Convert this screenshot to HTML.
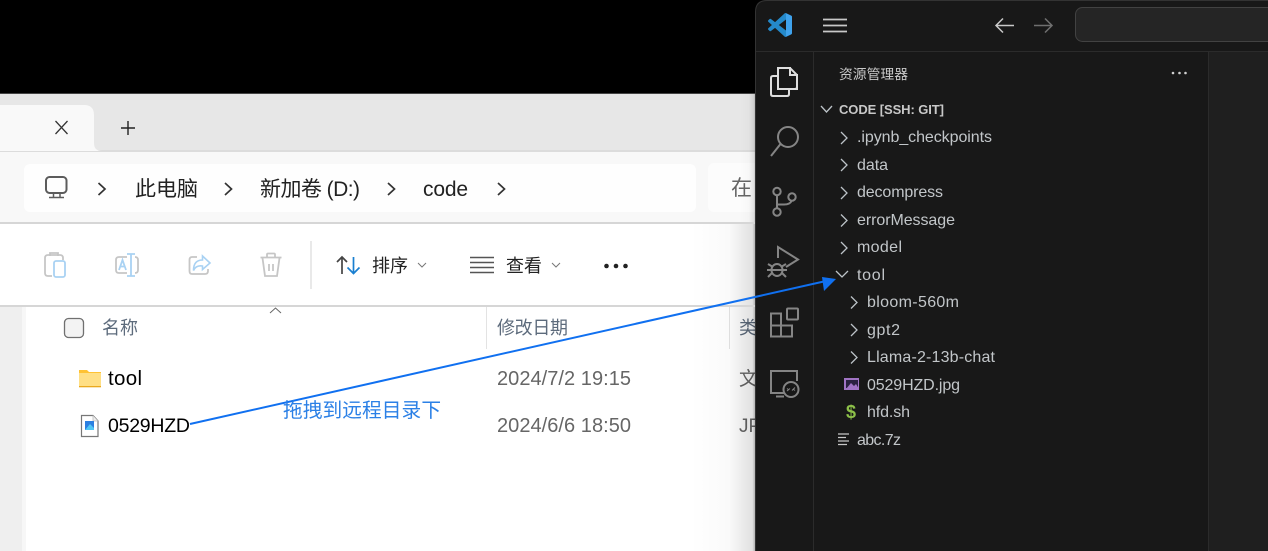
<!DOCTYPE html>
<html lang="zh"><head><meta charset="utf-8"><title>Explorer and VS Code</title>
<style>
html,body{margin:0;padding:0;background:#000;width:1268px;height:551px;overflow:hidden}
svg{display:block}
text{font-family:"Liberation Sans","Noto Sans CJK SC",sans-serif;white-space:pre}
.t{font-size:16px;fill:#c2c6c9}
.i{fill:none;stroke:#858585;stroke-width:2}
.c{fill:none;stroke:#bcc3c8;stroke-width:1.3}
.g{fill:none;stroke:#c6c6c6;stroke-width:1.8}
.b{fill:none;stroke:#a9d2f3;stroke-width:1.8}
.k{fill:none;stroke:#333;stroke-width:1.7}
</style></head><body>
<svg width="1268" height="551" viewBox="0 0 1268 551" xmlns="http://www.w3.org/2000/svg">
<defs><linearGradient id="sh" x1="0" x2="1" y1="0" y2="0">
<stop offset="0" stop-color="#000" stop-opacity="0"/><stop offset=".6" stop-color="#000" stop-opacity=".02"/><stop offset=".96" stop-color="#000" stop-opacity=".12"/><stop offset="1" stop-color="#000" stop-opacity=".3"/></linearGradient></defs>
<rect width="1268" height="551" fill="#000"/>
<!-- explorer -->
<rect x="0" y="93" width="760" height="458" fill="#fff"/>
<rect x="0" y="93" width="760" height="1" fill="#444"/>
<rect x="0" y="94" width="760" height="57" fill="#e7e7e7"/>
<rect x="0" y="150" width="760" height="2" fill="#dcdcdc"/>
<path d="M0 105H84Q94 105 94 115V143Q94 151 102 151H0Z" fill="#f9f9f9"/>
<rect x="0" y="152" width="760" height="70" fill="#f8f8f8"/>
<rect x="0" y="222" width="760" height="2" fill="#d6d6d6"/>
<rect x="24" y="164" width="672" height="48" rx="6" fill="#fefefe"/>
<rect x="708" y="163" width="60" height="49" rx="6" fill="#fcfcfc"/>
<rect x="0" y="305" width="760" height="2" fill="#d6d6d6"/>
<rect x="0" y="307" width="22" height="244" fill="#efefef"/>
<rect x="22" y="307" width="4" height="244" fill="#f7f7f7"/>
<path d="M55.500 121L67.500 134M67.500 121L55.500 134" stroke="#333" stroke-width="1.300" fill="none"/>
<path d="M128 121V135M121 128H135" stroke="#222" stroke-width="1.400" fill="none"/>
<!-- pc icon -->
<rect x="46" y="177" width="20.500" height="16" rx="3.500" fill="none" stroke="#5c5c5c" stroke-width="2"/>
<path d="M53.500 193V197M60 193V197M49 197.500H64" stroke="#5c5c5c" stroke-width="1.500" fill="none"/>
<path class="k" d="M98.500 183L105 189L98.500 195M225 183L231.500 189L225 195M388 183L394.500 189L388 195M498 183L504.500 189L498 195"/>
<text x="135" y="196" font-size="21" fill="#222" textLength="63">此电脑</text>
<text x="260" y="196" font-size="21" fill="#222" textLength="100">新加卷 (D:)</text>
<text x="423" y="196" font-size="21" fill="#222" textLength="45">code</text>
<text x="731" y="195" font-size="21" fill="#666">在</text>
<!-- toolbar disabled icons -->
<path class="g" d="M52 276H48Q45 276 45 273V258Q45 255 48 255H60Q63 255 63 258V260M50 256V253H58V256"/>
<rect class="b" x="54" y="261" width="11" height="16" rx="2"/>
<path class="g" d="M127 257H119Q116 257 116 260V270Q116 273 119 273H127M135 257H135Q138 257 138 260V270Q138 273 135 273H135"/>
<path class="b" d="M131 254V276M127 254H135M127 276H135M119 270L122.500 260L126 270M120.500 266.500H124.500"/>
<path class="g" d="M197 257H192Q189.500 257 189.500 260V271Q189.500 274 192 274H205Q208 274 208 271V269"/>
<path d="M202.500 256L210 263L202.500 269.500V266Q196 265 193.500 270.500Q193.500 260 202.500 260Z" fill="none" stroke="#a9d2f3" stroke-width="1.600"/>
<path class="g" d="M260.500 257.500H281.500M267 257V254.500Q267 253.500 268 253.500H274Q275 253.500 275 254.500V257M262.500 258L265 276H277L279.500 258M269 264V271M273 264V271"/>
<rect x="310" y="241" width="2" height="48" fill="#e9e9e9"/>
<path d="M342 274V257M337 262L342 257L347 262" fill="none" stroke="#444" stroke-width="1.700"/>
<path d="M353.500 257V273.500M347.500 267.500L353.500 273.500L359.500 267.500" fill="none" stroke="#1a7fd0" stroke-width="1.700"/>
<text x="372" y="272" font-size="18" fill="#222" textLength="36">排序</text>
<path d="M418 263L422 267L426 263M552 263L556 267L560 263" fill="none" stroke="#777" stroke-width="1"/>
<path d="M470 257.500H494M470 262.500H494M470 267.500H494M470 272.500H494" stroke="#555" stroke-width="1.400" fill="none"/>
<text x="506" y="272" font-size="18" fill="#222" textLength="36">查看</text>
<circle cx="606.500" cy="266" r="2.300" fill="#222"/><circle cx="616" cy="266" r="2.300" fill="#222"/><circle cx="625.500" cy="266" r="2.300" fill="#222"/>
<!-- list header -->
<rect x="64.500" y="318.500" width="19" height="19" rx="4" fill="#f3f3f3" stroke="#707070" stroke-width="1.300"/>
<text x="102" y="334" font-size="18" fill="#5d6b7c" textLength="36">名称</text>
<path d="M270 313L275.500 308L281 313" fill="none" stroke="#666" stroke-width="1"/>
<rect x="486" y="307" width="1" height="42" fill="#e3e3e3"/>
<rect x="729" y="307" width="1" height="42" fill="#e3e3e3"/>
<text x="497" y="334" font-size="18" fill="#5d6b7c" textLength="71">修改日期</text>
<text x="739" y="334" font-size="18" fill="#5d6b7c">类</text>
<!-- rows -->
<path d="M79 370H87L89 372H101V387H79Z" fill="#ffc233"/>
<rect x="79" y="373" width="22" height="14" fill="#ffdf85"/>
<rect x="79" y="386" width="22" height="1.300" fill="#eaa91f"/>
<text x="108" y="385" font-size="20.500" fill="#000" textLength="34">tool</text>
<path d="M81.500 415.500H93L98 421V436.500H81.500Z" fill="#fff" stroke="#777" stroke-width="1.200"/>
<path d="M93 415.500V421H98" fill="#eee" stroke="#bbb" stroke-width=".8"/>
<rect x="85" y="421" width="9" height="9" fill="#2b7fe0"/><path d="M85 430L90 424L94 428V430Z" fill="#50c6f5"/>
<text x="108" y="432" font-size="19.500" fill="#000" textLength="82">0529HZD</text>
<text x="497" y="385" font-size="20" fill="#666" textLength="134">2024/7/2 19:15</text>
<text x="497" y="432" font-size="20" fill="#666" textLength="134">2024/6/6 18:50</text>
<text x="739" y="385" font-size="19" fill="#666">文</text>
<text x="739" y="432" font-size="19" fill="#666">JPG</text>
<rect x="690" y="224" width="65" height="81" fill="url(#sh)"/>
<rect x="690" y="307" width="65" height="244" fill="url(#sh)"/>
<rect x="740" y="94" width="15" height="128" fill="url(#sh)"/>
<!-- vscode -->
<path d="M755.500 570V12Q755.500 .5 767 .5H1290V570Z" fill="#181818" stroke="#333"/>
<rect x="756" y="51" width="512" height="1" fill="#2b2b2b"/>
<rect x="813" y="52" width="1" height="499" fill="#2b2b2b"/>
<rect x="1208" y="52" width="60" height="499" fill="#1f1f1f"/>
<rect x="1208" y="52" width="1" height="499" fill="#2b2b2b"/>
<!-- logo -->
<path transform="translate(768 13)" fill="#2489ca" fill-rule="evenodd" d="M23.150 2.587L18.210.210a1.494 1.494 0 0 0-1.705.290l-9.460 8.630-4.120-3.128a.999.999 0 0 0-1.276.057L.327 7.261A1 1 0 0 0 .326 8.740L3.899 12 .326 15.260a1 1 0 0 0 .001 1.479L1.650 17.940a.999.999 0 0 0 1.276.057l4.120-3.128 9.460 8.630a1.492 1.492 0 0 0 1.704.290l4.942-2.377A1.500 1.500 0 0 0 24 20.060V3.939a1.500 1.500 0 0 0-.850-1.352zm-5.146 14.861L10.826 12l7.178-5.448v10.896z"/>
<path transform="translate(768 13)" fill="#3fa2ec" d="M18 .2L23.150 2.587A1.500 1.500 0 0 1 24 3.939V20.060A1.500 1.500 0 0 1 23.150 21.410L18 23.800Z"/>
<path d="M823 19.500H847M823 25.500H847M823 31.500H847" stroke="#c8c8c8" stroke-width="1.800" fill="none"/>
<path d="M1014 25.500H996M1003 18.500L996 25.500L1003 32.500" fill="none" stroke="#c8c8c8" stroke-width="1.500"/>
<path d="M1034 25.500H1052M1045 18.500L1052 25.500L1045 32.500" fill="none" stroke="#6f6f6f" stroke-width="1.500"/>
<rect x="1075.500" y="7.500" width="220" height="34" rx="7" fill="#252525" stroke="#424242"/>
<!-- activity bar -->
<path d="M778 76V69Q778 68 780 68H790L797 75V87Q797 89 795 89H790" fill="none" stroke="#dedede" stroke-width="2"/>
<path d="M778 68H790V75H797V89H778Z" fill="none" stroke="#dedede" stroke-width="2"/>
<path d="M778 76H773Q771 76 771 78V94Q771 96 773 96H787Q789 96 789 94V89" fill="none" stroke="#dedede" stroke-width="2"/>
<circle cx="788" cy="137" r="10" class="i"/><path class="i" d="M780.500 144L771 156"/>
<circle cx="777" cy="191.500" r="3.700" class="i"/><circle cx="777" cy="212" r="3.700" class="i"/><circle cx="792" cy="197" r="3.700" class="i"/>
<path class="i" d="M777 195V208M777 204.500H784Q790 204.500 791.500 201"/>
<path class="i" d="M778 258V247L798 259.500L786 267"/>
<ellipse cx="777" cy="270" rx="5.500" ry="6" class="i"/><path class="i" d="M771.500 270H782.500M768 264L773 267M786 264L781 267M767 270H771M783 270H787M768 277L772 273M786 277L782 273"/>
<path class="i" d="M781 313.500H771V336.500H792V325.500H781ZM771 325.500H781M781 325.500V336.500"/>
<rect x="787" y="308.500" width="11" height="11" rx="1" class="i"/>
<path class="i" d="M784 393H771V371H797V381M776 396.500H784"/>
<circle cx="791" cy="389.500" r="7.500" class="i"/>
<path d="M787 391L790 388.500M787 388.500L789 390M795 387.500L792 390.500M795 390.500L793 389" stroke="#858585" stroke-width="1" fill="none"/>
<!-- sidebar -->
<text x="839" y="79" font-size="13.800" fill="#c8c8c8" textLength="69">资源管理器</text>
<circle cx="1173" cy="73" r="1.300" fill="#d0d0d0"/><circle cx="1179.500" cy="73" r="1.300" fill="#d0d0d0"/><circle cx="1185.500" cy="73" r="1.300" fill="#d0d0d0"/>
<path class="c" d="M821 106L826.500 112L832 106"/>
<text x="839" y="114" font-size="13" font-weight="700" fill="#c8c8c8" textLength="105">CODE [SSH: GIT]</text>
<path class="c" d="M841 132L847 138L841 144M841 159L847 165L841 171M841 187L847 193L841 199M841 214.500L847 220.500L841 226.500M841 242L847 248L841 254M836 271L842 277L848 271M851 296.500L857 302.500L851 308.500M851 324L857 330L851 336M851 351.500L857 357.500L851 363.500"/>
<text class="t" x="857" y="142" textLength="135">.ipynb_checkpoints</text>
<text class="t" x="857" y="170" textLength="31">data</text>
<text class="t" x="857" y="197" textLength="86">decompress</text>
<text class="t" x="857" y="225" textLength="98">errorMessage</text>
<text class="t" x="857" y="252" textLength="45">model</text>
<text class="t" x="857" y="280" textLength="28">tool</text>
<text class="t" x="867" y="307" textLength="92">bloom-560m</text>
<text class="t" x="867" y="335" textLength="33">gpt2</text>
<text class="t" x="867" y="362" textLength="128">Llama-2-13b-chat</text>
<text class="t" x="867" y="390" textLength="93">0529HZD.jpg</text>
<text class="t" x="867" y="417" textLength="43">hfd.sh</text>
<text class="t" x="857" y="445" textLength="44">abc.7z</text>
<rect x="844" y="378" width="15" height="12" fill="#a074c4"/><rect x="846" y="380" width="12" height="8" fill="#2a2140"/><path d="M846 389L851 383L854 386L856 384L859 389Z" fill="#a074c4"/>
<text x="846" y="418" font-size="18" font-weight="700" fill="#8dc149">$</text>
<path d="M838 434H849M838 437.500H846M838 441H849M838 444.500H847" stroke="#c8c8c8" stroke-width="1.300" fill="none"/>
<!-- annotation -->
<path d="M190 424L826 281" stroke="#1070f0" stroke-width="2" fill="none"/>
<path d="M836 279L822 277L824 291Z" fill="#1070f0"/>
<text x="283" y="417" font-size="19.700" fill="#2b80e6" textLength="158">拖拽到远程目录下</text>
</svg>
</body></html>
